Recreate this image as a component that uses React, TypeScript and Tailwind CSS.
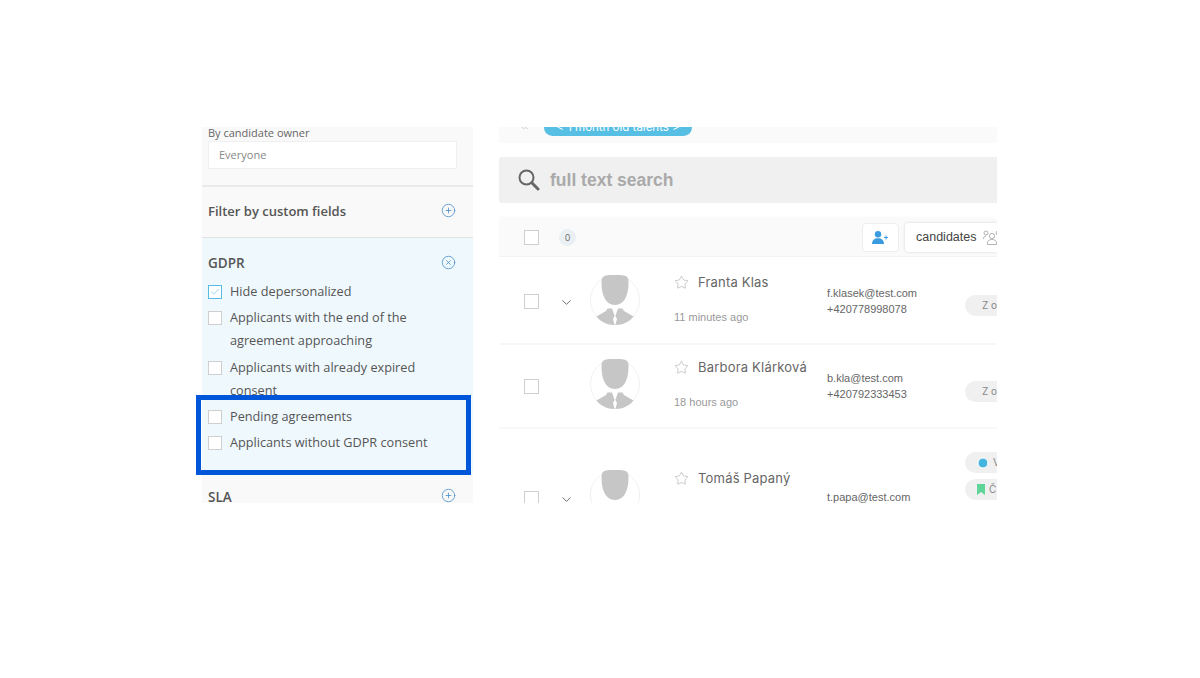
import { ChevronDown, ChevronsLeft, Check, CirclePlus, CircleX, Star, Clock } from "lucide-react";

const Box = ({ checked = false, className = "" }: { checked?: boolean; className?: string }) => (
  <span className={`flex h-[14px] w-[14px] shrink-0 items-center justify-center border bg-white ${checked ? "border-[#55bde6] bg-[#f2fbff]" : "border-[#cfcfcf]"} ${className}`}>
    {checked && <Check size={10} strokeWidth={1.5} className="text-[#55bde6]" />}
  </span>
);

const Option = ({ lines, checked = false, gap = "" }: { lines: string[]; checked?: boolean; gap?: string }) => (
  <div className={`flex gap-[8px] ${gap}`}>
    <Box checked={checked} className="mt-[5px]" />
    <div className="text-[12.7px] leading-[23.5px] text-[#555]">
      {lines.map((l) => (
        <div key={l}>{l}</div>
      ))}
    </div>
  </div>
);

const Avatar = () => (
  <svg width="50" height="50" viewBox="0 0 50 50" className="shrink-0">
    <circle cx="25" cy="25" r="24.6" fill="#fff" stroke="#eeeeee" strokeWidth="0.8" />
    <path
      fill="#c6c6c6"
      d="M16 0.5C20 -0.4 30 -0.4 34 0.5C37 1 38.5 3 38.5 6C38.5 13 38 18 35.5 23C33.5 27 30 30 25 30C20 30 16.5 27 14.5 23C12 18 11.5 13 11.5 6C11.5 3 13 1 16 0.5Z"
    />
    <path
      fill="#c6c6c6"
      d="M6.5 41.5L16 36L17.5 33.5H22L24.6 41L23 44L24.6 50C17 50 11 47 6.5 41.5Z"
    />
    <path
      fill="#c6c6c6"
      d="M43.5 41.5L34 36L32.5 33.5H28L25.4 41L27 44L25.4 50C33 50 39 47 43.5 41.5Z"
    />
  </svg>
);

const Pill = ({ children, className = "pl-[12px]" }: { children: React.ReactNode; className?: string }) => (
  <div className={`flex h-[21px] w-[60px] items-center gap-[4px] rounded-full bg-[#f0f0f0] text-[10px] text-[#888] ${className}`}>
    {children}
  </div>
);

const Row = ({
  name,
  time,
  email,
  phone,
  chevron = true,
  height,
  top,
  boxTop,
  nameTop = "",
  pills,
  contactTop,
}: {
  name: string;
  time?: string;
  email: string;
  phone?: string;
  chevron?: boolean;
  height: string;
  top: string;
  boxTop: string;
  nameTop?: string;
  pills: React.ReactNode;
  contactTop: string;
}) => (
  <div className={`flex shrink-0 border-b-2 border-[#f8f8f8] pl-[25px] ${height}`}>
    <div className={`flex w-[66px] shrink-0 items-start ${top}`}>
      <div className={`flex items-center ${boxTop}`}>
        <Box className="h-[15px] w-[15px]" />
        {chevron && <ChevronDown size={15} strokeWidth={1.5} className="ml-[20px] mt-[2px] text-[#666]" />}
      </div>
    </div>
    <div className={top}>
      <Avatar />
    </div>
    <div className={`ml-[34px] w-[153px] shrink-0 ${top}`}>
      <div className={`flex items-center gap-[9px] text-[13px] leading-[15px] text-[#666] ${nameTop}`}>
        <Star size={15} strokeWidth={1} className="shrink-0 text-[#aaa]" />
        <span className="whitespace-nowrap tracking-[0.2px]">{name}</span>
      </div>
      {time && <div className="mt-[20px] text-[11px] leading-[14px] text-[#999] [font-family:'Liberation_Sans',sans-serif]">{time}</div>}
    </div>
    <div className={`w-[138px] shrink-0 text-[11px] leading-[16px] text-[#666] [font-family:'Liberation_Sans',sans-serif] ${contactTop}`}>
      <div>{email}</div>
      {phone && <div>{phone}</div>}
    </div>
    {pills}
  </div>
);

export default function App() {
  return (
    <div className="relative h-[678px] w-[1200px] overflow-hidden bg-white pl-[202px] pt-[127px] [font-family:'Open_Sans',sans-serif]">
      <div className="flex h-[376px] w-[795px] overflow-hidden">
        <aside className="flex w-[271px] shrink-0 flex-col bg-[#f9f9f9]">
          <div className="h-[60px] shrink-0 border-b-2 border-[#e9e9e9] pl-[6px]">
            <div className="text-[11px] leading-[12px] text-[#666]">By candidate owner</div>
            <div className="mt-[2px] flex h-[28px] w-[249px] items-center border border-[#f0f0f0] bg-white pl-[10px] text-[11px] text-[#888]">
              Everyone
            </div>
          </div>
          <div className="flex h-[51px] shrink-0 items-center justify-between border-b border-[#dfe3e5] pl-[6px] pr-[17px]">
            <span className="text-[13px] font-semibold text-[#555]">Filter by custom fields</span>
            <CirclePlus size={15} strokeWidth={1.2} className="mb-[3px] text-[#3f88c5]" />
          </div>
          <div className="h-[236px] shrink-0 bg-[#eff8fd] pl-[6px] pr-[17px] pt-[15px]">
            <div className="flex items-center justify-between">
              <span className="text-[13.5px] font-semibold leading-[20px] text-[#555]">GDPR</span>
              <CircleX size={15} strokeWidth={1.2} className="mb-[1px] text-[#3f88c5]" />
            </div>
            <Option checked lines={["Hide depersonalized"]} gap="mt-[7px]" />
            <Option lines={["Applicants with the end of the", "agreement approaching"]} gap="mt-[2px]" />
            <Option lines={["Applicants with already expired", "consent"]} gap="mt-[3px]" />
            <Option lines={["Pending agreements"]} gap="mt-[2px]" />
            <Option lines={["Applicants without GDPR consent"]} gap="mt-[2.5px]" />
          </div>
          <div className="flex items-center justify-between pl-[6px] pr-[17px] pt-[13px]">
            <span className="text-[13.5px] font-semibold leading-[20px] text-[#555]">SLA</span>
            <CirclePlus size={15} strokeWidth={1.2} className="mb-[3px] text-[#3f88c5]" />
          </div>
        </aside>

        <main className="ml-[26px] flex w-[498px] shrink-0 flex-col overflow-hidden [font-family:'Inter',sans-serif]">
          <div className="flex h-[16px] shrink-0 items-start bg-[#fafafa] pl-[20px]">
            <ChevronsLeft size={11} strokeWidth={1.5} className="-mt-[6px] text-[#aaa]" />
            <div className="-mt-[8px] ml-[14px] flex h-[17px] w-[148px] items-center justify-center rounded-full bg-[#57bfe3] text-[11.5px] whitespace-nowrap text-white">
              &lt; 1 month old talents &gt;
            </div>
          </div>
          <div className="mt-[14px] flex h-[46px] shrink-0 items-center gap-[10px] rounded-l-[3px] bg-[#f0f0f0] pl-[19px]">
            <svg width="22" height="22" viewBox="0 0 22 22" fill="none" stroke="#666">
              <circle cx="8.5" cy="8.5" r="7" strokeWidth="2" />
              <path d="M13.8 13.8L20 20" strokeWidth="3" strokeLinecap="round" />
            </svg>
            <span className="text-[17.5px] font-semibold text-[#aaa] [font-family:'Liberation_Sans',sans-serif]">full text search</span>
          </div>
          <div className="mt-[16px] flex min-h-0 flex-1 flex-col shadow-[-3px_0_6px_rgba(0,0,0,0.05)]">
            <div className="flex h-[38px] shrink-0 items-center border-b border-[#f3f3f3] bg-[#fafafa] pl-[25px]">
              <Box className="h-[15px] w-[15px]" />
              <span className="ml-[20px] flex h-[17px] w-[17px] items-center justify-center rounded-full bg-[#e9eff3] text-[9px] text-[#777]">0</span>
              <div className="ml-auto flex items-center gap-[6px]">
                <div className="flex h-[29px] w-[37px] items-center justify-center rounded-[4px] border border-[#eeeeee] bg-white">
                  <svg width="17" height="13" viewBox="0 0 17 13" fill="#3a9be0">
                    <circle cx="6" cy="3.2" r="3.2" />
                    <path d="M0 13C0 9 2.5 7.2 6 7.2S12 9 12 13Z" />
                    <path d="M13.5 4.5h1v1.5H16v1h-1.5v1.5h-1V7H12V6h1.5Z" />
                  </svg>
                </div>
                <div className="flex h-[29px] w-[92px] items-center overflow-hidden rounded-l-[4px] bg-white pl-[11px] text-[12.5px] text-[#444] shadow-[0_0_3px_rgba(0,0,0,0.15)] [font-family:'Liberation_Sans',sans-serif]">
                  candidates
                  <svg width="20" height="15" viewBox="0 0 20 15" fill="none" stroke="#aaa" strokeWidth="0.9" className="ml-[7px] shrink-0">
                    <circle cx="3" cy="3" r="2" />
                    <path d="M0.5 9C0.5 7 1.5 6 3 6" />
                    <circle cx="9" cy="6" r="2.6" />
                    <path d="M4.5 14.5V13C4.5 10.5 6.5 9.5 9 9.5S13.5 10.5 13.5 13V14.5Z" />
                    <circle cx="15" cy="3" r="2" />
                  </svg>
                </div>
              </div>
            </div>
            <Row
              name="Franta Klas"
              time="11 minutes ago"
              email="f.klasek@test.com"
              phone="+420778998078"
              height="h-[88px]"
              top="pt-[18px]"
              boxTop="mt-[18px]"
              contactTop="pt-[28px]"
              pills={<div className="mt-[38px]"><Pill className="pl-[17px]">Z o</Pill></div>}
            />
            <Row
              name="Barbora Klárková"
              time="18 hours ago"
              email="b.kla@test.com"
              phone="+420792333453"
              chevron={false}
              height="h-[84px]"
              top="pt-[14px]"
              boxTop="mt-[20px]"
              nameTop="mb-[1px] mt-[1px]"
              contactTop="pt-[25px]"
              pills={<div className="mt-[36px]"><Pill className="pl-[17px]">Z o</Pill></div>}
            />
            <Row
              name="Tomáš Papaný"
              email="t.papa@test.com"
              height="h-[90px]"
              top="pt-[41px]"
              boxTop="mt-[20px]"
              nameTop="mt-[1px]"
              contactTop="pt-[60px]"
              pills={
                <div className="mt-[23px] flex flex-col gap-[6px]">
                  <Pill>
                    <Clock size={12} className="shrink-0 fill-[#45b5dd] text-white" />V
                  </Pill>
                  <Pill>
                    <svg width="8" height="11" viewBox="0 0 8 11" fill="#5fd59a" className="shrink-0">
                      <path d="M0 0H8V11L4 8L0 11Z" />
                    </svg>
                    Č
                  </Pill>
                </div>
              }
            />
          </div>
        </main>
      </div>
      <div className="absolute left-[196px] top-[395px] h-[80px] w-[275px] border-[5px] border-[#0056d8]" />
    </div>
  );
}
